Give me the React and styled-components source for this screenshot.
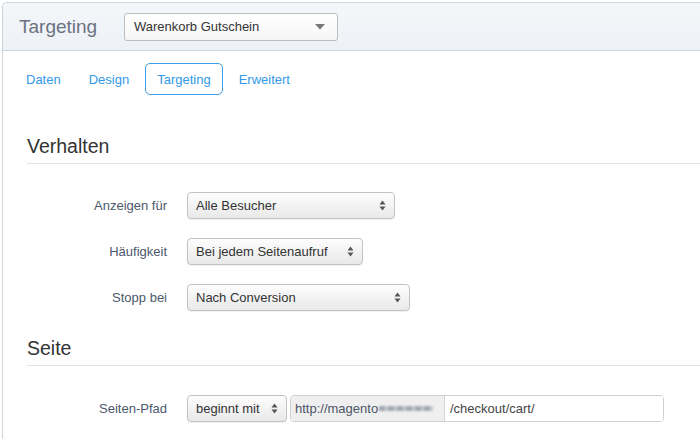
import React from "react";
import styled, { createGlobalStyle } from "styled-components";

const Global = createGlobalStyle`
  html, body { margin: 0; padding: 0; background: #fff; }
  body { font-family: "Liberation Sans", Arial, sans-serif; -webkit-font-smoothing: antialiased; }
  * { box-sizing: border-box; }
`;

const Page = styled.div`
  padding: 2px 0 0 2px;
  width: 700px;
  height: 439px;
  overflow: hidden;
`;

const Panel = styled.div`
  width: 760px;
  border: 1px solid #cdd4dc;
  border-right: none;
  border-top-left-radius: 5px;
  min-height: 460px;
  background: #fff;
`;

const Header = styled.div`
  height: 48px;
  display: flex;
  align-items: center;
  padding-left: 16px;
  background: linear-gradient(#f4f7fa, #eef1f5);
  border-bottom: 1px solid #c8d6e4;
  border-top-left-radius: 4px;
`;

const Title = styled.div`
  font-size: 19px;
  color: #6b7281;
  width: 105px;
`;

const Dropdown = styled.div`
  width: 214px;
  height: 28px;
  display: flex;
  align-items: center;
  justify-content: space-between;
  padding: 0 12px 0 9px;
  border: 1px solid #bdbdbd;
  border-radius: 3px;
  background: linear-gradient(#ffffff, #f6f6f6);
  font-size: 13px;
  color: #333;
`;

const Tabs = styled.div`
  display: flex;
  padding: 12px 0 0 11px;
  gap: 4px;
`;

const Tab = styled.div`
  height: 32px;
  padding: 0 11px;
  display: flex;
  align-items: center;
  font-size: 13px;
  color: #3399ea;
  border: 1px solid ${(p) => (p.$active ? "#3c9ee8" : "transparent")};
  border-radius: 5px;
`;

const Body = styled.div`
  padding-left: 24px;
`;

const SectionTitle = styled.div`
  font-size: 19.5px;
  color: #333;
  padding-top: ${(p) => p.$top}px;
  height: ${(p) => p.$h}px;
  border-bottom: 1px solid #e3e3e3;
`;

const Rows = styled.div`
  display: flex;
  flex-direction: column;
  gap: 19px;
  padding-top: ${(p) => p.$top}px;
  padding-bottom: ${(p) => p.$bottom}px;
`;

const Row = styled.div`
  display: flex;
  align-items: center;
`;

const Label = styled.div`
  width: 140px;
  text-align: right;
  font-size: 13px;
  color: #4c586d;
  margin-right: 20px;
`;

const Select = styled.div`
  width: ${(p) => p.$w}px;
  height: 27px;
  display: flex;
  align-items: center;
  justify-content: space-between;
  padding: 0 8px 0 8px;
  border: 1px solid #c2c2c2;
  border-radius: 4px;
  background: linear-gradient(#fdfdfd, #e9e9e9);
  box-shadow: 0 1px 1px rgba(0, 0, 0, 0.06);
  font-size: 13px;
  color: #333;
`;

const InputGroup = styled.div`
  display: flex;
  margin-left: 3px;
  width: 374px;
  height: 27px;
  border: 1px solid #cfcfcf;
  border-radius: 4px;
  overflow: hidden;
`;

const Addon = styled.div`
  width: 154px;
  display: flex;
  align-items: center;
  padding-left: 4px;
  background: #efefef;
  border-right: 1px solid #d4d4d4;
  font-size: 13px;
  color: #4d5566;
`;

const Blur = styled.span`
  display: inline-block;
  width: 54px;
  height: 5px;
  margin-left: 1px;
  background: repeating-linear-gradient(90deg, #a3a8b2 0 6px, #c4c8cf 6px 9px);
  filter: blur(1.3px);
`;

const Input = styled.div`
  flex: 1;
  display: flex;
  align-items: center;
  padding-left: 5px;
  font-size: 13px;
  color: #444;
  background: #fff;
`;

const UpDown = () => (
  <svg width="7" height="11" viewBox="0 0 7 11">
    <path d="M0.5 4.5 L3.5 0.5 L6.5 4.5 Z" fill="#555" />
    <path d="M0.5 6.5 L3.5 10.5 L6.5 6.5 Z" fill="#555" />
  </svg>
);

const Caret = () => (
  <svg width="10" height="6" viewBox="0 0 10 6">
    <path d="M0 0 H10 L5 5.5 Z" fill="#777" />
  </svg>
);

export default function App() {
  return (
    <>
      <Global />
      <Page>
        <Panel>
          <Header>
            <Title>Targeting</Title>
            <Dropdown>
              <span>Warenkorb Gutschein</span>
              <Caret />
            </Dropdown>
          </Header>
          <Tabs>
            <Tab>Daten</Tab>
            <Tab>Design</Tab>
            <Tab $active>Targeting</Tab>
            <Tab>Erweitert</Tab>
          </Tabs>
          <Body>
            <SectionTitle $top={40} $h={69}>Verhalten</SectionTitle>
            <Rows $top={28} $bottom={0}>
              <Row>
                <Label>Anzeigen für</Label>
                <Select $w={208}>
                  <span>Alle Besucher</span>
                  <UpDown />
                </Select>
              </Row>
              <Row>
                <Label>Häufigkeit</Label>
                <Select $w={176}>
                  <span>Bei jedem Seitenaufruf</span>
                  <UpDown />
                </Select>
              </Row>
              <Row>
                <Label>Stopp bei</Label>
                <Select $w={223}>
                  <span>Nach Conversion</span>
                  <UpDown />
                </Select>
              </Row>
            </Rows>
            <SectionTitle $top={26} $h={55}>Seite</SectionTitle>
            <Rows $top={29} $bottom={20}>
              <Row>
                <Label>Seiten-Pfad</Label>
                <Select $w={100}>
                  <span>beginnt mit</span>
                  <UpDown />
                </Select>
                <InputGroup>
                  <Addon>
                    http://magento<Blur />
                  </Addon>
                  <Input>/checkout/cart/</Input>
                </InputGroup>
              </Row>
            </Rows>
          </Body>
        </Panel>
      </Page>
    </>
  );
}
